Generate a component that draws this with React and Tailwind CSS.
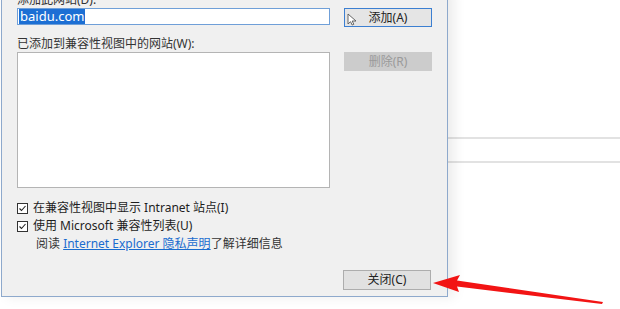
import { useState } from 'react'

const FONT = "font-['Noto_Sans','Noto_Sans_CJK_SC',sans-serif]"

function Check({ label }) {
  return (
    <label className="flex items-center h-[18px] gap-[5px] text-[12px] text-[#1e1e1e]">
      <span className="w-[11px] h-[11px] border border-[#333] bg-white flex items-center justify-center">
        <svg className="w-[9px] h-[9px]" viewBox="0 0 9 9" fill="none">
          <path d="M1.5 4.5l2 2 4-4.5" stroke="#222" strokeWidth="1.1" />
        </svg>
      </span>
      {label}
    </label>
  )
}

function Btn({ children, focused, disabled, className = '' }) {
  return (
    <button
      className={`w-[88px] h-[19px] text-[12px] flex items-center justify-center border ${
        focused
          ? 'border-[#3c7fd1] bg-[#e5e5e5] text-[#222]'
          : disabled
          ? 'border-[#cccccc] bg-[#cccccc] text-[#9a9a9a]'
          : 'border-[#adadad] bg-[#e1e1e1] text-[#222]'
      } ${className}`}
    >
      {children}
    </button>
  )
}

export default function App() {
  const [site, setSite] = useState('baidu.com')

  return (
    <div className={`relative w-[620px] h-[309px] overflow-hidden bg-white flex items-start ${FONT}`}>
      {/* dialog */}
      <div className="ml-[1px] -mt-[12px] w-[447px] bg-[#f0f0f0] border-x border-b border-[#8ea9cc] shadow-[6px_0_12px_rgba(0,0,0,0.08)] pl-[15px] pr-[15px] pt-[4px] pb-[6px] z-10">
        <div className="h-[16px] text-[12px] leading-[16px] text-[#333]">添加此网站(D):</div>
        <div className="flex items-start gap-[14px]">
          <div className="w-[313px] h-[17px] bg-white border border-[#6f9fd8] flex items-center px-[1px]">
            <span className="bg-[#1c6fd4] text-white text-[13px] leading-[13px] px-[1px] py-[1px]">{site}</span>
          </div>
          <Btn focused>添加(A)</Btn>
        </div>

        <div className="mt-[9px] h-[16px] text-[12px] leading-[16px] text-[#333]">已添加到兼容性视图中的网站(W):</div>
        <div className="flex items-start gap-[14px]">
          <div className="w-[313px] h-[136px] bg-white border border-[#b4b4b4]"></div>
          <Btn disabled>删除(R)</Btn>
        </div>

        <div className="mt-[11px] flex flex-col">
          <Check label="在兼容性视图中显示 Intranet 站点(I)" />
          <Check label="使用 Microsoft 兼容性列表(U)" />
          <div className="h-[17px] pl-[19px] flex items-center text-[12px] text-[#333]">
            阅读&nbsp;<a className="text-[#1a6ccf] underline" onClick={() => setSite(site)}>Internet Explorer 隐私声明</a>了解详细信息
          </div>
        </div>

        <div className="mt-[18px] flex justify-end pr-[1px]">
          <Btn className="h-[20px]">关闭(C)</Btn>
        </div>
      </div>

      {/* page behind */}
      <div className="flex-1 flex flex-col pt-[137px]">
        <div className="h-[2px] bg-[#e2e2e2]"></div>
        <div className="h-[22px]"></div>
        <div className="h-[2px] bg-[#e2e2e2]"></div>
      </div>

      {/* mouse cursor */}
      <svg className="absolute left-[347px] top-[13px] z-20" width="10" height="13" viewBox="0 0 10 13">
        <path d="M1 1v10l2.5-2.3L5.2 12l1.6-.7-1.6-3.3H9z" fill="#fff" stroke="#555" strokeWidth="0.9" strokeLinejoin="round" />
      </svg>

      {/* red arrow */}
      <svg className="absolute inset-0 z-20" width="620" height="309" viewBox="0 0 620 309">
        <polygon points="433,283 460,275 457,280.5 603,302 602,304 457,286.5 459,292" fill="#f21414" />
      </svg>
    </div>
  )
}
